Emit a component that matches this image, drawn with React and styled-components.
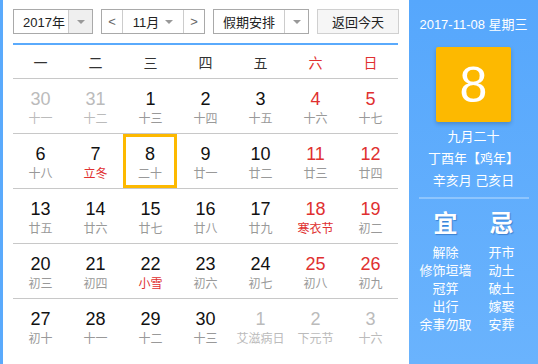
import React from "react";
import styled, { createGlobalStyle } from "styled-components";

const GlobalStyle = createGlobalStyle`
  body {
    margin: 0;
    font-family: "Liberation Sans", "Noto Sans CJK SC", sans-serif;
    background: #fff;
  }
`;

const weekdays = ["一", "二", "三", "四", "五", "六", "日"];

// [day, lunar, flags] flags: o = other month, r = red number, f = red festival, s = selected
const weeks = [
  [["30", "十一", "o"], ["31", "十二", "o"], ["1", "十三"], ["2", "十四"], ["3", "十五"], ["4", "十六", "r"], ["5", "十七", "r"]],
  [["6", "十八"], ["7", "立冬", "f"], ["8", "二十", "s"], ["9", "廿一"], ["10", "廿二"], ["11", "廿三", "r"], ["12", "廿四", "r"]],
  [["13", "廿五"], ["14", "廿六"], ["15", "廿七"], ["16", "廿八"], ["17", "廿九"], ["18", "寒衣节", "rf"], ["19", "初二", "r"]],
  [["20", "初三"], ["21", "初四"], ["22", "小雪", "f"], ["23", "初六"], ["24", "初七"], ["25", "初八", "r"], ["26", "初九", "r"]],
  [["27", "初十"], ["28", "十一"], ["29", "十二"], ["30", "十三"], ["1", "艾滋病日", "o"], ["2", "下元节", "o"], ["3", "十六", "o"]],
];

const yi = ["解除", "修饰垣墙", "冠笄", "出行", "余事勿取"];
const ji = ["开市", "动土", "破土", "嫁娶", "安葬"];

const App = () => {
  return (
    <Page>
      <GlobalStyle />
      <Main>
        <Toolbar>
          <Select>
            <SelectText $w={54}>2017年</SelectText>
            <ArrowBox $gray>
              <Caret />
            </ArrowBox>
          </Select>
          <Select>
            <NavBtn>&lt;</NavBtn>
            <SelectText $w={60} $center>
              11月 <Caret />
            </SelectText>
            <NavBtn $right>&gt;</NavBtn>
          </Select>
          <Select>
            <SelectText $w={70} $center>假期安排</SelectText>
            <ArrowBox>
              <Caret />
            </ArrowBox>
          </Select>
          <TodayBtn>返回今天</TodayBtn>
        </Toolbar>
        <WeekHead>
          {weekdays.map((w, i) => (
            <WeekDay key={w} $red={i >= 5}>
              {w}
            </WeekDay>
          ))}
        </WeekHead>
        {weeks.map((row, ri) => (
          <Row key={ri} $last={ri === weeks.length - 1}>
            {row.map(([d, l, f = ""], ci) => (
              <Cell key={ci} $selected={f.includes("s")}>
                <Num $other={f.includes("o")} $red={f.includes("r")}>
                  {d}
                </Num>
                <Lunar $other={f.includes("o")} $red={f.includes("f")}>
                  {l}
                </Lunar>
              </Cell>
            ))}
          </Row>
        ))}
      </Main>
      <Side>
        <DateLine>2017-11-08 星期三</DateLine>
        <BigDay>8</BigDay>
        <LunarInfo>
          <div>九月二十</div>
          <div>丁酉年【鸡年】</div>
          <div>辛亥月 己亥日</div>
        </LunarInfo>
        <Divider />
        <Almanac>
          <AlmanacCol>
            <AlmanacHead>宜</AlmanacHead>
            {yi.map((t) => (
              <AlmanacItem key={t}>{t}</AlmanacItem>
            ))}
          </AlmanacCol>
          <AlmanacCol>
            <AlmanacHead>忌</AlmanacHead>
            {ji.map((t) => (
              <AlmanacItem key={t}>{t}</AlmanacItem>
            ))}
          </AlmanacCol>
        </Almanac>
      </Side>
    </Page>
  );
};

const Page = styled.div`
  display: flex;
  width: 538px;
  height: 364px;
  overflow: hidden;
`;

const Main = styled.div`
  width: 385px;
  flex: none;
  padding: 9px 11px 0 10px;
  border-left: 3px solid #5aaafc;
`;

const Toolbar = styled.div`
  display: flex;
  align-items: center;
  height: 25px;
  padding-bottom: 9px;
  border-bottom: 2px solid #5aaafc;
`;

const Select = styled.div`
  display: flex;
  flex: none;
  height: 25px;
  box-sizing: border-box;
  border: 1px solid #a9a9a9;
  margin-right: 8px;
  font-size: 13px;
  color: #222;
`;

const SelectText = styled.div`
  width: ${(p) => p.$w}px;
  flex: none;
  display: flex;
  align-items: center;
  justify-content: ${(p) => (p.$center ? "center" : "flex-start")};
  padding-left: ${(p) => (p.$center ? 0 : 9)}px;
  box-sizing: border-box;
  gap: 6px;
`;

const ArrowBox = styled.div`
  width: 23px;
  flex: none;
  display: flex;
  align-items: center;
  justify-content: center;
  border-left: 1px solid #ccc;
  background: ${(p) => (p.$gray ? "#efefef" : "#fff")};
`;

const Caret = styled.span`
  display: inline-block;
  width: 0;
  height: 0;
  border-left: 4px solid transparent;
  border-right: 4px solid transparent;
  border-top: 4px solid #999;
`;

const NavBtn = styled.div`
  width: 21px;
  flex: none;
  box-sizing: border-box;
  display: flex;
  align-items: center;
  justify-content: center;
  color: #666;
  font-size: 13px;
  border-${(p) => (p.$right ? "left" : "right")}: 1px solid #ccc;
`;

const TodayBtn = styled.div`
  width: 82px;
  flex: none;
  height: 25px;
  box-sizing: border-box;
  border: 1px solid #d0d0d0;
  background: #f6f6f6;
  display: flex;
  align-items: center;
  justify-content: center;
  font-size: 13px;
  color: #222;
`;

const WeekHead = styled.div`
  display: grid;
  grid-template-columns: repeat(7, 55px);
  height: 33px;
  align-items: center;
  border-bottom: 1px solid #c8c8c8;
`;

const WeekDay = styled.div`
  text-align: center;
  font-size: 14px;
  color: ${(p) => (p.$red ? "#e03030" : "#333")};
`;

const Row = styled.div`
  display: grid;
  grid-template-columns: repeat(7, 55px);
  height: 54px;
  border-bottom: ${(p) => (p.$last ? "none" : "1px solid #c8c8c8")};
`;

const Cell = styled.div`
  display: flex;
  flex-direction: column;
  align-items: center;
  padding-top: 10px;
  box-sizing: border-box;
  box-shadow: ${(p) => (p.$selected ? "inset 0 0 0 3px #fdb900" : "none")};
  margin-right: ${(p) => (p.$selected ? 1 : 0)}px;
`;

const Num = styled.div`
  font-size: 18px;
  line-height: 21px;
  color: ${(p) => (p.$other ? "#bbb" : p.$red ? "#e03030" : "#111")};
`;

const Lunar = styled.div`
  font-size: 12px;
  line-height: 18px;
  white-space: nowrap;
  color: ${(p) => (p.$other ? "#bbb" : p.$red ? "#e03030" : "#999")};
`;

const Side = styled.div`
  width: 129px;
  flex: none;
  background: linear-gradient(#56a7fc, #6ab3fd);
  color: #fff;
  display: flex;
  flex-direction: column;
  align-items: center;
  padding-top: 16px;
`;

const DateLine = styled.div`
  font-size: 13px;
  line-height: 18px;
  white-space: nowrap;
`;

const BigDay = styled.div`
  width: 75px;
  height: 75px;
  margin-top: 13px;
  background: #fdb900;
  border-radius: 2px;
  box-shadow: 0 2px 4px rgba(0, 0, 0, 0.2);
  display: flex;
  align-items: center;
  justify-content: center;
  font-size: 50px;
  color: #fff;
`;

const LunarInfo = styled.div`
  margin-top: 4px;
  font-size: 13px;
  line-height: 22px;
  text-align: center;
  white-space: nowrap;
`;

const Divider = styled.div`
  width: 110px;
  height: 2px;
  background: #8ec5fd;
  margin-top: 5px;
`;

const Almanac = styled.div`
  display: flex;
  gap: 2px;
  margin-top: 12px;
`;

const AlmanacCol = styled.div`
  display: flex;
  flex-direction: column;
  align-items: center;
  width: 54px;
`;

const AlmanacHead = styled.div`
  font-size: 24px;
  line-height: 26px;
  font-weight: bold;
  text-shadow: 1px 1px 1px rgba(0, 60, 140, 0.4);
  margin-bottom: 7px;
`;

const AlmanacItem = styled.div`
  font-size: 13px;
  line-height: 18px;
  white-space: nowrap;
`;

export default App;
